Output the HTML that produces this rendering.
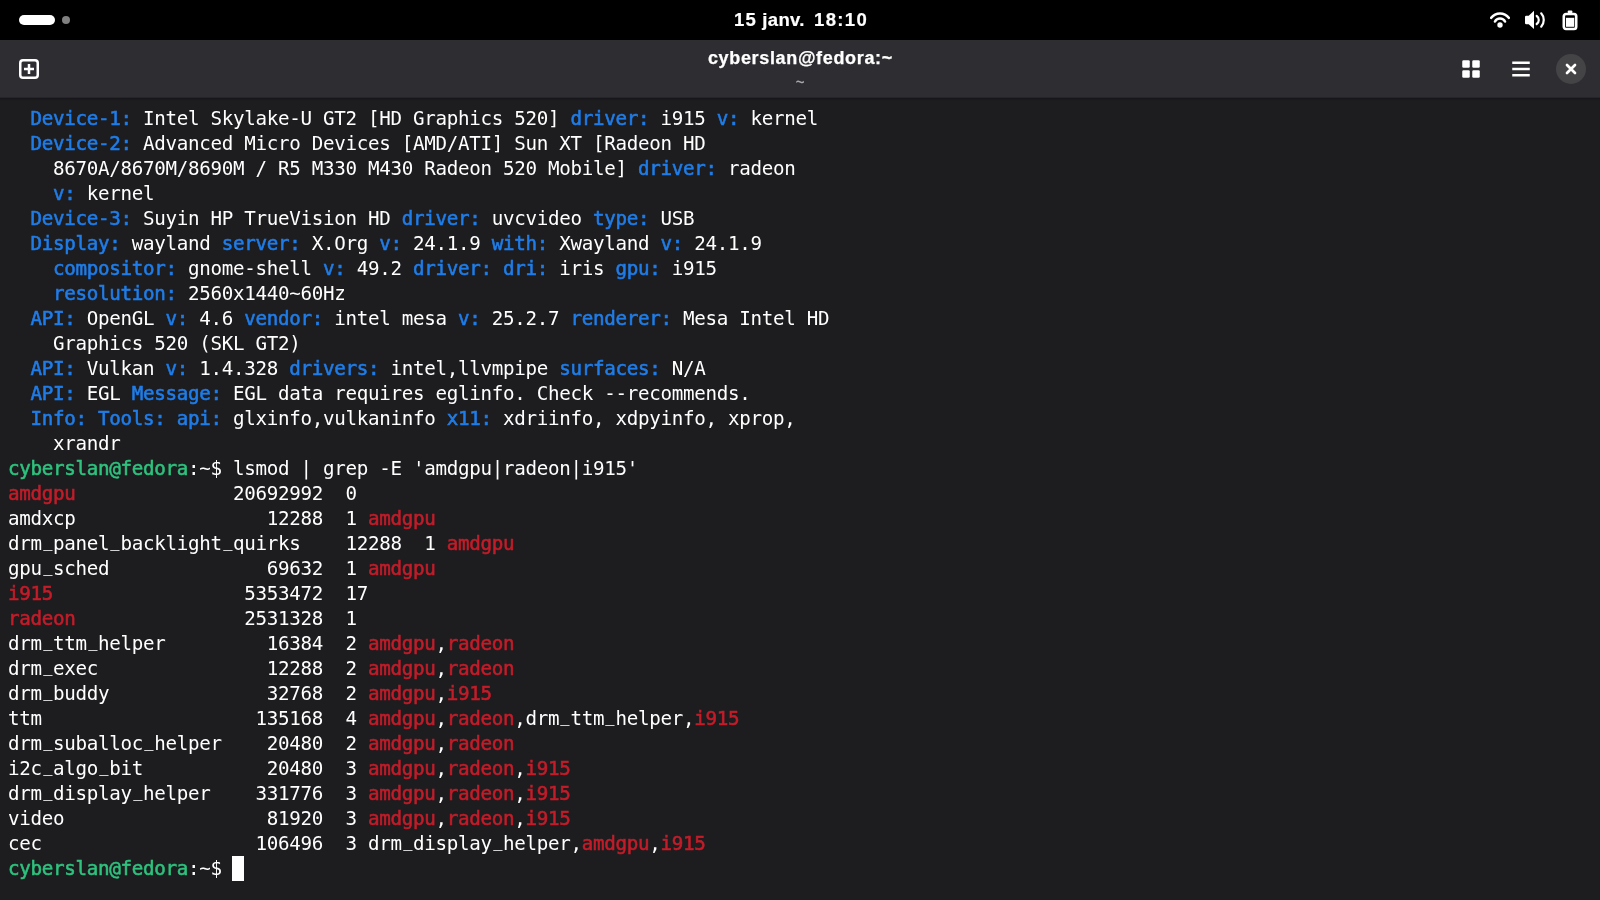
<!DOCTYPE html>
<html lang="fr">
<head>
<meta charset="utf-8">
<title>cyberslan@fedora:~</title>
<style>
html,body{margin:0;padding:0;}
body{width:1600px;height:900px;overflow:hidden;background:#1d1d20;position:relative;font-family:"Liberation Sans",sans-serif;}
#topbar{position:absolute;left:0;top:0;width:1600px;height:40px;background:#000;}
#pill{position:absolute;left:19px;top:15px;width:36px;height:10px;border-radius:5px;background:#fff;}
#dot{position:absolute;left:62.4px;top:16.2px;width:7.6px;height:7.6px;border-radius:4px;background:#808080;}
#clock{position:absolute;left:0;width:1600px;top:7.5px;height:24px;line-height:24px;text-align:center;color:#fff;font-weight:bold;font-size:18.5px;letter-spacing:0.55px;white-space:pre;transform:translateZ(0);-webkit-text-stroke:0.2px #fff;}
#header{position:absolute;left:0;top:40px;width:1600px;height:57px;background:#2e2e32;}
#title{position:absolute;left:0.4px;width:1600px;top:6.4px;height:24px;line-height:24px;text-align:center;color:#fff;font-weight:bold;font-size:18px;letter-spacing:0.66px;transform:translateZ(0);-webkit-text-stroke:0.25px #fff;}
#subtitle{position:absolute;left:0;width:1600px;top:33.5px;transform:scaleY(1.4);height:16px;line-height:16px;text-align:center;color:#a8a8ab;font-size:15.5px;}
#term{position:absolute;left:8px;top:106px;margin:0;color:#fff;font-family:"DejaVu Sans Mono","Liberation Mono",monospace;font-size:19.2px;line-height:25px;white-space:pre;letter-spacing:-0.3036px;transform:translateZ(0);}
#term .l{display:block;height:25px;}
.b{color:#1f7de9;-webkit-text-stroke:0.55px #1f7de9;}
.g{color:#2ec27e;-webkit-text-stroke:0.55px #2ec27e;}
.r{color:#c41c29;-webkit-text-stroke:0.55px #c41c29;}
#cursor{position:absolute;left:232.4px;top:856px;width:11.3px;height:25px;background:#fff;}
svg{position:absolute;}
#hshadow{position:absolute;left:0;top:97px;width:1600px;height:4px;background:linear-gradient(to bottom,#2e2e32 0,#17171b 1.4px,#18181b 2px,#1d1d20 4px);}
#closebg{position:absolute;left:1556px;top:53.75px;width:30px;height:30px;border-radius:15px;background:#444447;}
.u{display:inline-block;transform:translateY(-3.6px) scaleX(0.8);}
#clock span{position:absolute;top:0;}
</style>
</head>
<body>
<div id="topbar">
  <div id="pill"></div><div id="dot"></div>
  <div id="clock"><span style="left:734px;letter-spacing:1.3px">15 </span><span style="left:762.3px;letter-spacing:0.35px">janv.  </span><span style="left:814px;letter-spacing:1.35px">18:10</span></div>
</div>
<div id="header">
  <div id="title">cyberslan@fedora:~</div>
  <div id="subtitle">~</div>
</div>

<div id="hshadow"></div>
<!-- new tab -->
<svg style="left:18.75px;top:58.75px" width="20" height="20" viewBox="0 0 16 16"><rect x="1" y="1" width="14" height="14" rx="2.2" fill="none" stroke="#fff" stroke-width="2"/><path d="M4 8h8M8 4v8" stroke="#fff" stroke-width="2" fill="none"/></svg>
<!-- grid -->
<svg style="left:1461.2px;top:58.75px" width="20" height="20" viewBox="0 0 16 16" fill="#fff"><rect x="1" y="1" width="6" height="6" rx="1"/><rect x="9" y="1" width="6" height="6" rx="1"/><rect x="1" y="9" width="6" height="6" rx="1"/><rect x="9" y="9" width="6" height="6" rx="1"/></svg>
<!-- menu -->
<svg style="left:1510.75px;top:58.5px" width="20" height="20" viewBox="0 0 16 16" fill="#fff"><rect x="1" y="2" width="14" height="2"/><rect x="1" y="7" width="14" height="2"/><rect x="1" y="12" width="14" height="2"/></svg>
<!-- close -->
<div id="closebg"></div>
<svg style="left:1561.2px;top:58.75px" width="20" height="20" viewBox="0 0 16 16"><path d="M4.8 4.8l6.4 6.4M11.2 4.8l-6.4 6.4" stroke="#fff" stroke-width="2.15" stroke-linecap="round" fill="none"/></svg>
<!-- wifi -->
<svg style="left:1490px;top:10px" width="20" height="20" viewBox="0 0 20 20" fill="none" stroke="#fff" stroke-linecap="round"><path d="M1.2 7.8 A11.15 11.15 0 0 1 18.8 7.8" stroke-width="2.6"/><path d="M5 11.5 A5.67 5.67 0 0 1 15 11.5" stroke-width="2.6"/><circle cx="10" cy="15" r="2.7" fill="#fff" stroke="none"/></svg>
<!-- volume -->
<svg style="left:1525px;top:10px" width="20" height="20" viewBox="0 0 20 20" fill="none" stroke="#fff" stroke-linecap="round"><path d="M0 7 a1.2 1.2 0 0 1 1.2-1.2 H3.7 L9 0.8 V19 L3.7 14.2 H1.2 a1.2 1.2 0 0 1-1.2-1.2 Z" fill="#fff" stroke="none"/><path d="M11.7 6 A4.9 4.9 0 0 1 11.7 14" stroke-width="2.2"/><path d="M16.2 3.3 A10.05 10.05 0 0 1 16.2 16.7" stroke-width="2.2"/></svg>
<!-- battery -->
<svg style="left:1560px;top:9.5px" width="20" height="21" viewBox="0 0 20 21"><rect x="7.8" y="0.5" width="4.5" height="3.4" rx="0.8" fill="#fff"/><rect x="3.8" y="4" width="12.4" height="15" rx="2.2" fill="none" stroke="#fff" stroke-width="2.6"/><rect x="6" y="7.8" width="8.2" height="9" fill="#fff"/></svg>
<pre id="term"><span class="l">  <span class="b">Device-1:</span> Intel Skylake-U GT2 [HD Graphics 520] <span class="b">driver:</span> i915 <span class="b">v:</span> kernel</span><span class="l">  <span class="b">Device-2:</span> Advanced Micro Devices [AMD/ATI] Sun XT [Radeon HD</span><span class="l">    8670A/8670M/8690M / R5 M330 M430 Radeon 520 Mobile] <span class="b">driver:</span> radeon</span><span class="l">    <span class="b">v:</span> kernel</span><span class="l">  <span class="b">Device-3:</span> Suyin HP TrueVision HD <span class="b">driver:</span> uvcvideo <span class="b">type:</span> USB</span><span class="l">  <span class="b">Display:</span> wayland <span class="b">server:</span> X.Org <span class="b">v:</span> 24.1.9 <span class="b">with:</span> Xwayland <span class="b">v:</span> 24.1.9</span><span class="l">    <span class="b">compositor:</span> gnome-shell <span class="b">v:</span> 49.2 <span class="b">driver:</span> <span class="b">dri:</span> iris <span class="b">gpu:</span> i915</span><span class="l">    <span class="b">resolution:</span> 2560x1440~60Hz</span><span class="l">  <span class="b">API:</span> OpenGL <span class="b">v:</span> 4.6 <span class="b">vendor:</span> intel mesa <span class="b">v:</span> 25.2.7 <span class="b">renderer:</span> Mesa Intel HD</span><span class="l">    Graphics 520 (SKL GT2)</span><span class="l">  <span class="b">API:</span> Vulkan <span class="b">v:</span> 1.4.328 <span class="b">drivers:</span> intel,llvmpipe <span class="b">surfaces:</span> N/A</span><span class="l">  <span class="b">API:</span> EGL <span class="b">Message:</span> EGL data requires eglinfo. Check --recommends.</span><span class="l">  <span class="b">Info:</span> <span class="b">Tools:</span> <span class="b">api:</span> glxinfo,vulkaninfo <span class="b">x11:</span> xdriinfo, xdpyinfo, xprop,</span><span class="l">    xrandr</span><span class="l"><span class="g">cyberslan@fedora</span>:~$ lsmod | grep -E 'amdgpu|radeon|i915'</span><span class="l"><span class="r">amdgpu</span>              20692992  0</span><span class="l">amdxcp                 12288  1 <span class="r">amdgpu</span></span><span class="l">drm<span class="u">_</span>panel<span class="u">_</span>backlight<span class="u">_</span>quirks    12288  1 <span class="r">amdgpu</span></span><span class="l">gpu<span class="u">_</span>sched              69632  1 <span class="r">amdgpu</span></span><span class="l"><span class="r">i915</span>                 5353472  17</span><span class="l"><span class="r">radeon</span>               2531328  1</span><span class="l">drm<span class="u">_</span>ttm<span class="u">_</span>helper         16384  2 <span class="r">amdgpu</span>,<span class="r">radeon</span></span><span class="l">drm<span class="u">_</span>exec               12288  2 <span class="r">amdgpu</span>,<span class="r">radeon</span></span><span class="l">drm<span class="u">_</span>buddy              32768  2 <span class="r">amdgpu</span>,<span class="r">i915</span></span><span class="l">ttm                   135168  4 <span class="r">amdgpu</span>,<span class="r">radeon</span>,drm<span class="u">_</span>ttm<span class="u">_</span>helper,<span class="r">i915</span></span><span class="l">drm<span class="u">_</span>suballoc<span class="u">_</span>helper    20480  2 <span class="r">amdgpu</span>,<span class="r">radeon</span></span><span class="l">i2c<span class="u">_</span>algo<span class="u">_</span>bit           20480  3 <span class="r">amdgpu</span>,<span class="r">radeon</span>,<span class="r">i915</span></span><span class="l">drm<span class="u">_</span>display<span class="u">_</span>helper    331776  3 <span class="r">amdgpu</span>,<span class="r">radeon</span>,<span class="r">i915</span></span><span class="l">video                  81920  3 <span class="r">amdgpu</span>,<span class="r">radeon</span>,<span class="r">i915</span></span><span class="l">cec                   106496  3 drm<span class="u">_</span>display<span class="u">_</span>helper,<span class="r">amdgpu</span>,<span class="r">i915</span></span><span class="l"><span class="g">cyberslan@fedora</span>:~$ </span></pre>
<div id="cursor"></div>
</body>
</html>
